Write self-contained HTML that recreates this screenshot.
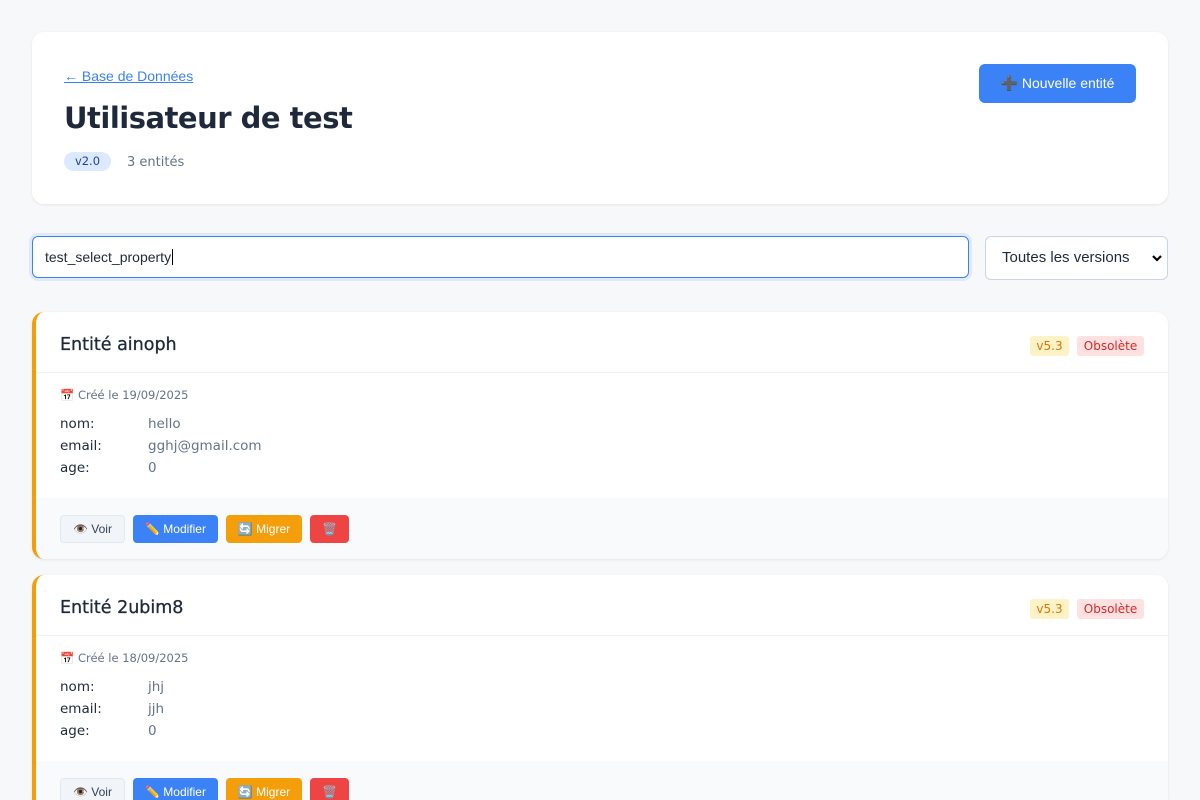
<!DOCTYPE html>
<html style="width:1200px;height:800px;overflow:hidden"><head><meta charset="utf-8"><style>
*{box-sizing:border-box;margin:0;padding:0}
body{width:1200px;height:800px;overflow:hidden;position:relative;background:#f7f8fa;font-family:"DejaVu Sans","Liberation Sans",sans-serif;color:#1e293b}
.card{position:absolute;left:32px;width:1136px;background:#fff;border-radius:12px;box-shadow:0 1px 3px rgba(0,0,0,.08)}
.head{top:32px;height:172px}
.link{position:absolute;left:32px;top:36px;font:14px "Liberation Sans",sans-serif;color:#3b82f6;text-decoration:underline}
h1{position:absolute;left:32px;top:69px;font-size:29px;font-weight:bold;letter-spacing:-0.5px;color:#1e293b;white-space:nowrap}
.vb{position:absolute;left:32px;top:120px;width:47px;height:19px;background:#dbeafe;color:#1e40af;border-radius:10px;font-size:11.5px;text-align:center;line-height:19px}
.cnt{position:absolute;left:95px;top:121px;font-size:13px;color:#64748b;line-height:19px}
.newb{position:absolute;left:947px;top:32px;width:157px;height:39px;background:#3b82f6;border-radius:6px;color:#fff;font:14px "Liberation Sans",sans-serif;text-align:center;line-height:39px}
.search{position:absolute;left:32px;top:236px;width:937px;height:42px;border:1px solid #3b82f6;border-radius:6px;background:#fff;box-shadow:0 0 0 3px rgba(59,130,246,.12);font:14px "Liberation Sans",sans-serif;padding-left:12px;line-height:40px}
.sel{position:absolute;left:985px;top:236px;width:183px;height:44px;border:1px solid #cbd5e1;border-radius:6px;background:#fff;font:15px "Liberation Sans",sans-serif;padding-left:16px;line-height:42px}
.sel svg{position:absolute;right:4px;top:17px}
.ent{border-left:4px solid #f59e0b;overflow:hidden}
.et{position:absolute;left:24px;top:23px;font-size:17.5px;color:#1e293b;-webkit-text-stroke:0.3px #1e293b}
.hr{position:absolute;left:0;right:0;top:60px;border-top:1px solid #eef0f4}
.tag{position:absolute;top:24px;height:20px;border-radius:3px;font-size:12px;line-height:20px;text-align:center}
.t1{left:994px;width:39px;background:#fef3c7;color:#d97706}
.t2{left:1041px;width:67px;background:#fee2e2;color:#dc2626}
.date{position:absolute;left:24px;top:76px;font-size:11.5px;color:#64748b}
.rows{position:absolute;left:24px;top:101px;font-size:13.5px;line-height:22px}
.rows div{display:flex}.rows b{font-weight:normal;color:#1e293b;width:88px}.rows span{color:#64748b}
.foot{position:absolute;left:0;right:0;top:186px;height:61px;background:#f8fafc}
.btn{position:absolute;top:17px;height:28px;border-radius:4px;font:12px "Liberation Sans",sans-serif;line-height:28px;text-align:center;color:#fff}
</style></head><body>
<div class="card head">
<div class="link">← Base de Données</div>
<h1>Utilisateur de test</h1>
<div class="vb">v2.0</div><div class="cnt">3 entités</div>
<div class="newb">➕ Nouvelle entité</div>
</div>
<div class="search">test_select_property<span style="border-left:1px solid #000;margin-left:1px"></span></div>
<div class="sel">Toutes les versions<svg width="12" height="8" viewBox="0 0 12 8"><path d="M2 2l4 4 4-4" stroke="#000" stroke-width="2.2" fill="none"/></svg></div>

<div class="card ent" style="top:312px;height:247px">
<div class="et">Entité ainoph</div><div class="tag t1">v5.3</div><div class="tag t2">Obsolète</div>
<div class="hr"></div>
<div class="date">📅 Créé le 19/09/2025</div>
<div class="rows"><div><b>nom:</b><span>hello</span></div><div><b>email:</b><span>gghj@gmail.com</span></div><div><b>age:</b><span>0</span></div></div>
<div class="foot">
<div class="btn" style="left:24px;width:65px;background:#f1f5f9;border:1px solid #e2e8f0;color:#334155;line-height:26px">👁️ Voir</div>
<div class="btn" style="left:97px;width:85px;background:#3b82f6">✏️ Modifier</div>
<div class="btn" style="left:190px;width:76px;background:#f59e0b">🔄 Migrer</div>
<div class="btn" style="left:274px;width:39px;background:#ef4444">🗑️</div>
</div></div>

<div class="card ent" style="top:575px;height:225px;border-bottom-left-radius:0;border-bottom-right-radius:0">
<div class="et">Entité 2ubim8</div><div class="tag t1">v5.3</div><div class="tag t2">Obsolète</div>
<div class="hr"></div>
<div class="date">📅 Créé le 18/09/2025</div>
<div class="rows"><div><b>nom:</b><span>jhj</span></div><div><b>email:</b><span>jjh</span></div><div><b>age:</b><span>0</span></div></div>
<div class="foot">
<div class="btn" style="left:24px;width:65px;background:#f1f5f9;border:1px solid #e2e8f0;color:#334155;line-height:26px">👁️ Voir</div>
<div class="btn" style="left:97px;width:85px;background:#3b82f6">✏️ Modifier</div>
<div class="btn" style="left:190px;width:76px;background:#f59e0b">🔄 Migrer</div>
<div class="btn" style="left:274px;width:39px;background:#ef4444">🗑️</div>
</div></div>
</body></html>
